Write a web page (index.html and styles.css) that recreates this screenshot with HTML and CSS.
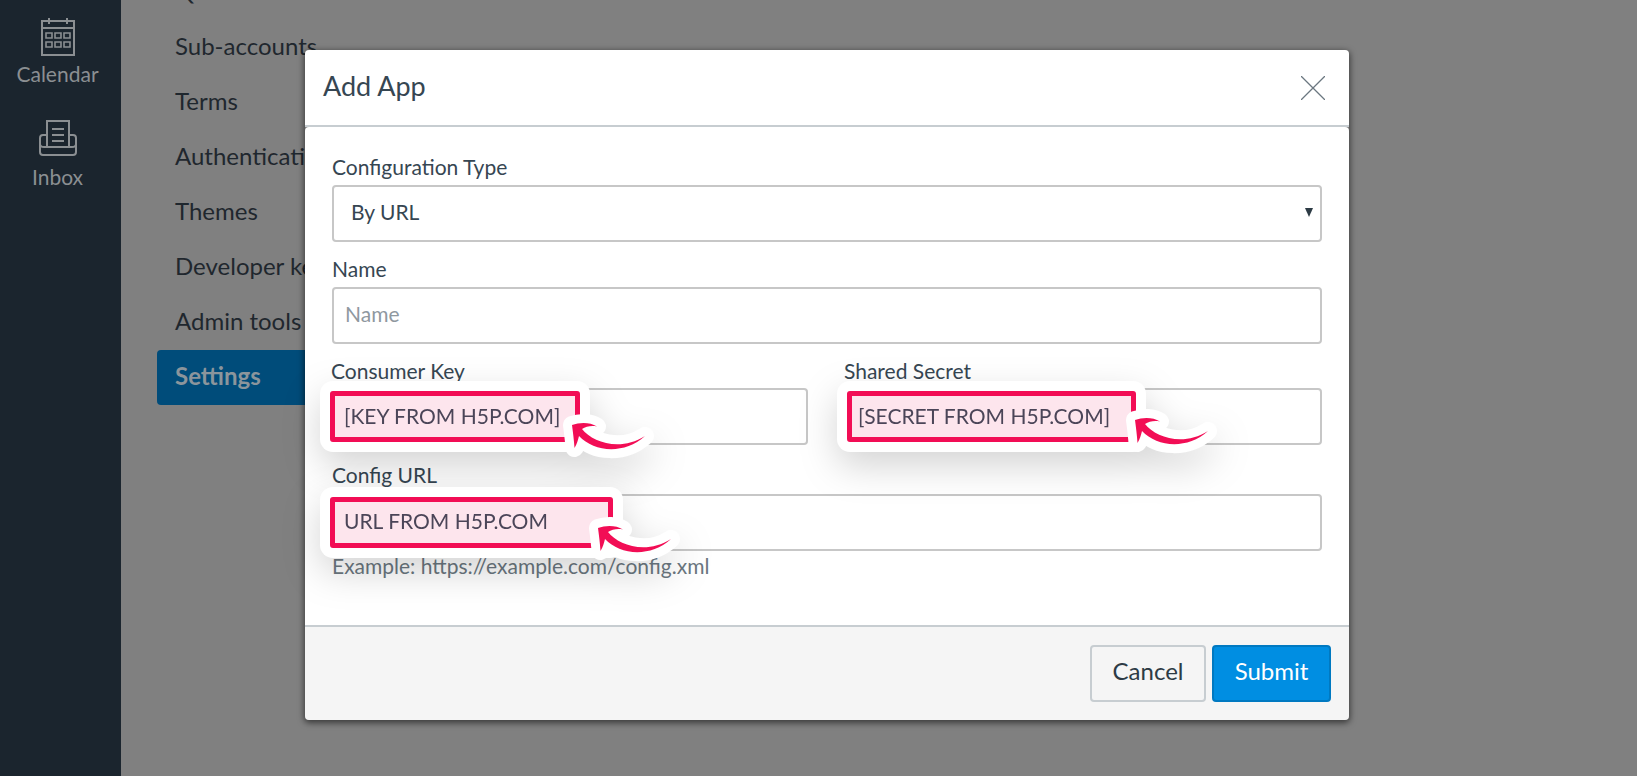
FILE: index.html
```html
<!DOCTYPE html>
<html lang="en">
<head>
<meta charset="utf-8">
<title>Add App</title>
<link rel="stylesheet" href="styles.css">
</head>
<body>
<svg class="defs" width="0" height="0" aria-hidden="true">
  <defs>
    <path id="arrow" d="M0 0C8-3 18-3 25 1.5C19 .5 14 1.5 10 4C20 17 48 27 73 11C52 30 22 27 7 11C6 15 5 19 2.5 23C2 15 1 8 0 0Z"/>
  </defs>
</svg>
<div class="page">
  <aside class="rail">
    <a class="rail-item">
      <svg class="rail-icon cal" viewBox="0 0 36 40" fill="none" stroke="currentColor" stroke-width="2">
        <path d="M2 5h32v34H2zM2 12h32M9 2v6M27 2v6"/>
        <path stroke-width="1.6" d="M6 17h6v5H6zM15 17h6v5h-6zM24 17h6v5h-6zM6 26h6v5H6zM15 26h6v5h-6zM24 26h6v5h-6z"/>
      </svg>
      <span>Calendar</span>
    </a>
    <a class="rail-item">
      <svg class="rail-icon inbox" viewBox="0 0 38 36" fill="none" stroke="currentColor" stroke-width="2">
        <path d="M8 27V1h22v26M13 9h12M13 15h12M13 21h12"/>
        <path d="M8 15H4q-3 0-3 3v14q0 3 3 3h30q3 0 3-3V18q0-3-3-3h-4"/>
        <path d="M1 24q0 3 4 3h28q4 0 4-3"/>
      </svg>
      <span>Inbox</span>
    </a>
  </aside>
  <nav class="subnav">
    <a>Quotas</a>
    <a>Sub-accounts</a>
    <a>Terms</a>
    <a>Authentication</a>
    <a>Themes</a>
    <a>Developer keys</a>
    <a>Admin tools</a>
    <a class="active">Settings</a>
  </nav>
</div>
<section class="modal">
  <header class="modal-head">
    <h1>Add App</h1>
    <svg class="close" viewBox="0 0 24 24" fill="none" stroke="#6b7780" stroke-width="1.3"><path d="M0 0l24 24M24 0L0 24"/></svg>
  </header>
  <form class="modal-body">
    <div class="field">
      <label>Configuration Type</label>
      <div class="select-wrap">
        <select class="control"><option>By URL</option></select>
      </div>
    </div>
    <div class="field">
      <label>Name</label>
      <input class="control" placeholder="Name">
    </div>
    <div class="pair">
      <div class="field key">
        <label>Consumer Key</label>
        <div class="anchor">
          <input class="control">
          <div class="mark mark-key">
            <div class="mark-box">[KEY FROM H5P.COM]</div>
            <svg class="arrow" viewBox="-12 -12 97 52"><use href="#arrow" class="halo"/><use href="#arrow" class="ink"/></svg>
          </div>
        </div>
      </div>
      <div class="field secret">
        <label>Shared Secret</label>
        <div class="anchor">
          <input class="control">
          <div class="mark mark-secret">
            <div class="mark-box">[SECRET FROM H5P.COM]</div>
            <svg class="arrow" viewBox="-12 -12 97 52"><use href="#arrow" class="halo"/><use href="#arrow" class="ink"/></svg>
          </div>
        </div>
      </div>
    </div>
    <div class="field url">
      <label>Config URL</label>
      <div class="anchor">
        <input class="control">
        <div class="mark mark-url">
          <div class="mark-box">URL FROM H5P.COM</div>
          <svg class="arrow" viewBox="-12 -12 97 52"><use href="#arrow" class="halo"/><use href="#arrow" class="ink"/></svg>
        </div>
      </div>
      <p class="hint">Example: https://example.com/config.xml</p>
    </div>
  </form>
  <footer class="modal-foot">
    <button class="btn" type="button"><span>Cancel</span></button>
    <button class="btn primary" type="button"><span>Submit</span></button>
  </footer>
</section>
</body>
</html>
```
FILE: styles.css
```css
* { box-sizing: border-box; }
html, body { margin: 0; height: 100%; overflow: hidden; }
body { font-family: Lato, "Open Sans", sans-serif; background: #808080; color: #2d3b45; font-variant-ligatures: common-ligatures discretionary-ligatures; }
.defs { position: absolute; }
.page { display: flex; height: 776px; }
.rail { width: 121px; flex: none; background: #1b252e; color: #8b8f92; display: flex; flex-direction: column; align-items: center; padding: 16px 6px 0 0; }
.rail-item { display: flex; flex-direction: column; align-items: center; font-size: 21px; line-height: 26px; }
.rail-item + .rail-item { margin-top: 33px; }
.rail-icon { display: block; }
.cal { width: 36px; height: 40px; margin: 0 0 5px 2px; }
.inbox { width: 38px; height: 36px; margin-bottom: 8px; }
.subnav { flex: 1; display: flex; flex-direction: column; margin-top: -37px; padding-left: 36px; font-size: 24px; color: #1f272e; }
.subnav a { width: 300px; height: 55px; line-height: 55px; padding-left: 18px; white-space: nowrap; flex: none; }
.subnav .active { background: #004c7a; color: #8b959c; font-weight: 700; border-radius: 4px; margin-top: 2px; line-height: 51px; }
.modal { position: absolute; left: 305px; top: 50px; width: 1044px; height: 670px; display: flex; flex-direction: column; border-radius: 4px; box-shadow: 0 2px 6px 1px rgba(0, 0, 0, .55); }
.modal-head { height: 77px; flex: none; background: #fff; border-radius: 4px 4px 0 0; border-bottom: 2px solid #c7cdd1; display: flex; align-items: center; justify-content: space-between; padding: 0 24px 0 18px; }
.modal-head h1 { margin: 0 0 4px; font-size: 27px; font-weight: 400; color: #364652; }
.close { width: 24px; height: 24px; }
.modal-body { flex: 1; background: #fff; border-radius: 4px 4px 0 0; padding: 28px 27px 0; }
.field { margin-bottom: 15px; }
.field label { display: block; font-size: 21px; line-height: 24px; height: 30px; color: #364652; }
.url label { height: 31px; }
.control { display: block; width: 100%; height: 57px; border: 2px solid #c7c7c7; border-radius: 4px; background: #fff; font: inherit; font-size: 21px; color: #364652; padding: 0 18px 5px 11px; outline: 0; }
.control::placeholder { color: #8f989f; opacity: 1; }
select.control { appearance: none; padding-left: 17px; }
.select-wrap { position: relative; }
.select-wrap::after { content: ""; position: absolute; right: 9px; top: 23px; border: 4.5px solid transparent; border-top: 9px solid #2d3b45; border-bottom: 0; }
.pair { display: flex; gap: 37px; }
.key { width: 476px; flex: none; }
.secret { flex: 1; }
.pair .field { margin-bottom: 18px; }
.pair .field label { height: 29px; margin-left: -1px; }
.anchor { position: relative; }
.mark { position: absolute; z-index: 2; filter: drop-shadow(0 14px 18px rgba(0, 0, 0, .17)); }
.mark-box { height: 71px; padding: 10px 10px 10px 24px; border-radius: 13px; background: #fff; font-size: 21px; line-height: 49px; color: #4b4558; white-space: nowrap; position: relative; isolation: isolate; }
.mark-box::before { content: ""; position: absolute; inset: 10px; border: 5px solid #f20d55; border-radius: 3px; background: #fde5ed; z-index: -1; }
.mark-key { left: -12px; top: -7px; width: 270px; }
.mark-secret { left: -8px; top: -7px; width: 309px; }
.mark-secret .mark-box { padding-left: 21px; }
.mark-url { left: -12px; top: -7px; width: 303px; }
.mark-url .mark-box { line-height: 47px; }
.arrow { position: absolute; width: 97px; height: 52px; overflow: visible; }
.mark-key .arrow { left: 240px; top: 32px; }
.mark-secret .arrow { left: 286px; top: 27px; }
.mark-url .arrow { left: 266px; top: 29px; }
.halo { fill: #fff; stroke: #fff; stroke-width: 18px; stroke-linejoin: round; }
.ink { fill: #f20d55; }
.hint { margin: 3px 0 0; font-size: 21px; line-height: 24px; color: #6b7780; }
.modal-foot { height: 95px; flex: none; background: #f5f5f5; border-top: 2px solid #c7cdd1; border-radius: 0 0 4px 4px; display: flex; justify-content: flex-end; gap: 6px; padding: 18px 18px 0 0; }
.btn { height: 57px; border: 2px solid #c7cdd1; border-radius: 4px; background: #f5f5f5; font: inherit; font-size: 24px; color: #2d3b45; width: 116px; padding: 0 0 6px; }
.primary { background: #008ee2; border-color: #0079c1; color: #fff; width: 119px; }
```
